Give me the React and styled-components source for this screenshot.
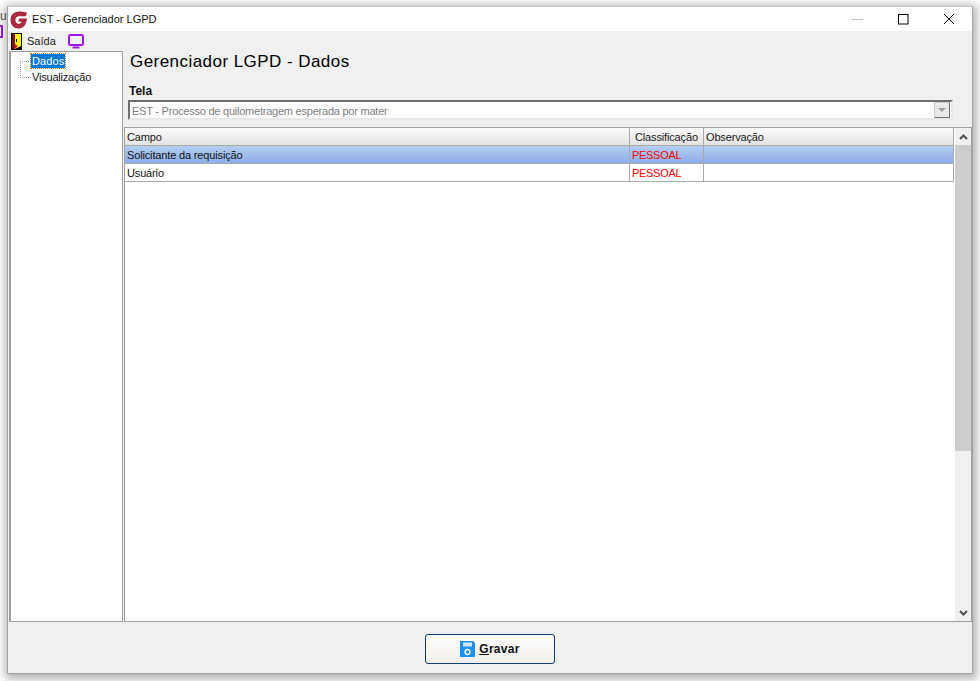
import React from "react"
import styled, { createGlobalStyle } from "styled-components"

const GlobalStyle = createGlobalStyle`
    html, body {
        margin: 0;
        padding: 0;
        height: 100%;
        background: #fff;
        overflow: hidden;
    }
    body {
        font-family: "Liberation Sans", Arial, sans-serif;
        font-size: 11px;
        color: #000;
    }
`

const rows = [
    { campo: "Solicitante da requisição", classificacao: "PESSOAL", observacao: "", selected: true },
    { campo: "Usuário", classificacao: "PESSOAL", observacao: "", selected: false },
]

const Logo = () => (
    <svg width="18" height="18" viewBox="0 0 18 18">
        <path d="M17 2 C15 1 12 0.5 9 0.5 C4 0.5 0.5 4 0.5 9 C0.5 14 4 17.5 8.5 17.5 C12 17.5 14.5 15.5 15.5 13 L17.3 7.6 H9.2 L8.2 10.4 H11.6 C11 12 10 12.8 8.8 12.8 C6.6 12.8 5.4 11.2 5.4 9 C5.4 6.8 7 5.2 9.2 5.2 H15.6 Z" fill="#a92a3e" />
    </svg>
)

const DoorIcon = () => (
    <svg width="11" height="17" viewBox="0 0 11 17">
        <rect x="0" y="0" width="11" height="17" fill="#000" />
        <rect x="1" y="1" width="3" height="15" fill="#7a1414" />
        <path d="M4 1 H10 V13 L4 16 Z" fill="#ffff00" />
        <path d="M4 11 L7 13 L4 16 Z" fill="#c81e1e" />
        <rect x="5" y="6" width="1" height="3" fill="#000" />
    </svg>
)

const ScreenIcon = () => (
    <svg width="16" height="15" viewBox="0 0 16 15">
        <rect x="1" y="1" width="14" height="10" rx="1.5" fill="none" stroke="#9a19e6" strokeWidth="2" />
        <rect x="4.5" y="12.5" width="7" height="2" fill="#9a19e6" />
    </svg>
)

const SaveIcon = () => (
    <svg width="15" height="16" viewBox="0 0 15 16">
        <path d="M0 0 H13 L15 2 V16 H0 Z" fill="#1e90ee" />
        <rect x="3" y="1.5" width="9" height="4" fill="#cfe6fa" />
        <circle cx="7.5" cy="11" r="2.4" fill="none" stroke="#fff" strokeWidth="1.5" />
    </svg>
)

const App = () => {
    return (
        <>
            <GlobalStyle />
            <BehindLetter>u</BehindLetter>
            <BehindIcon />
            <Window>
                <TitleBar>
                    <TitleLogo><Logo /></TitleLogo>
                    <TitleText>EST - Gerenciador LGPD</TitleText>
                    <WindowButtons>
                        <WindowButton>
                            <svg width="11" height="11" viewBox="0 0 11 11">
                                <path d="M0 5.5 H11" stroke="#bdbdbd" strokeWidth="1" />
                            </svg>
                        </WindowButton>
                        <WindowButton>
                            <svg width="11" height="11" viewBox="0 0 11 11">
                                <rect x="0.5" y="0.5" width="9.5" height="9.5" fill="none" stroke="#000" strokeWidth="1" />
                            </svg>
                        </WindowButton>
                        <WindowButton>
                            <svg width="12" height="12" viewBox="0 0 12 12">
                                <path d="M1 1 L11 11 M11 1 L1 11" stroke="#000" strokeWidth="1" />
                            </svg>
                        </WindowButton>
                    </WindowButtons>
                </TitleBar>
                <MenuBar>
                    <DoorIcon />
                    <MenuLabel>Saída</MenuLabel>
                    <ScreenIcon />
                </MenuBar>
                <Main>
                    <TreePanel>
                        <TreeRow>
                            <TreeConnector />
                            <TreeLabel $active>Dados</TreeLabel>
                        </TreeRow>
                        <TreeRow>
                            <TreeConnector $last />
                            <TreeLabel>Visualização</TreeLabel>
                        </TreeRow>
                    </TreePanel>
                    <Content>
                        <Heading>Gerenciador LGPD - Dados</Heading>
                        <FieldLabel>Tela</FieldLabel>
                        <Combo>
                            <ComboText>EST - Processo de quilometragem esperada por mater</ComboText>
                            <ComboButton />
                        </Combo>
                        <GridFrame>
                            <GridBody>
                                <HeaderRow>
                                    <HeaderCell $col="campo">Campo</HeaderCell>
                                    <HeaderCell $col="classificacao" $indent>Classificação</HeaderCell>
                                    <HeaderCell $col="observacao">Observação</HeaderCell>
                                </HeaderRow>
                                {rows.map((row) => (
                                    <DataRow key={row.campo} $selected={row.selected}>
                                        <DataCell $col="campo">{row.campo}</DataCell>
                                        <DataCell $col="classificacao" $red>{row.classificacao}</DataCell>
                                        <DataCell $col="observacao">{row.observacao}</DataCell>
                                    </DataRow>
                                ))}
                            </GridBody>
                            <ScrollBar>
                                <ScrollArrow>
                                    <svg width="9" height="6" viewBox="0 0 9 6">
                                        <path d="M1 5 L4.5 1.5 L8 5" fill="none" stroke="#505050" strokeWidth="2" />
                                    </svg>
                                </ScrollArrow>
                                <ScrollThumb />
                                <ScrollTrack />
                                <ScrollArrow>
                                    <svg width="9" height="6" viewBox="0 0 9 6">
                                        <path d="M1 1 L4.5 4.5 L8 1" fill="none" stroke="#505050" strokeWidth="2" />
                                    </svg>
                                </ScrollArrow>
                            </ScrollBar>
                        </GridFrame>
                    </Content>
                </Main>
                <Footer>
                    <SaveButton>
                        <SaveIcon />
                        <SaveLabel><u>G</u>ravar</SaveLabel>
                    </SaveButton>
                </Footer>
            </Window>
        </>
    )
}

export default App

const BehindLetter = styled.div`
    position: absolute;
    left: 0;
    top: 9px;
    font-size: 12px;
    color: #555;
`

const BehindIcon = styled.div`
    position: absolute;
    left: -14px;
    top: 25px;
    width: 13px;
    height: 9px;
    border: 2px solid #9a19e6;
`

const Window = styled.div`
    position: relative;
    box-sizing: border-box;
    display: flex;
    flex-direction: column;
    width: 966px;
    height: 668px;
    margin: 6px 0 0 7px;
    background: #f0f0f0;
    border: 1px solid #a3a3a3;
    border-top-color: #c4c4c4;
    box-shadow: 1px 2px 9px 3px rgba(0, 0, 0, 0.3);
`

const TitleBar = styled.div`
    display: flex;
    align-items: center;
    flex: 0 0 24px;
    background: #fff;
`

const TitleLogo = styled.div`
    display: flex;
    margin-left: 2px;
    margin-top: 1px;
`

const TitleText = styled.div`
    margin-left: 4px;
    font-size: 11px;
    color: #111;
`

const WindowButtons = styled.div`
    display: flex;
    margin-left: auto;
`

const WindowButton = styled.div`
    display: flex;
    align-items: center;
    justify-content: center;
    width: 46px;
    height: 24px;
`

const MenuBar = styled.div`
    display: flex;
    align-items: center;
    flex: 0 0 20px;
    padding-left: 3px;
`

const MenuLabel = styled.span`
    margin: 0 12px 0 5px;
    font-size: 11px;
    color: #222;
`

const Main = styled.div`
    display: flex;
    flex: 1;
    min-height: 0;
    padding-left: 1px;
`

const TreePanel = styled.div`
    box-sizing: border-box;
    flex: 0 0 114px;
    padding-top: 1px;
    background: #fff;
    border: 1px solid #a0a0a0;
    box-shadow: inset 1px 0 0 #a0a0a0;
`

const TreeRow = styled.div`
    position: relative;
    display: flex;
    align-items: center;
    height: 16px;
    padding-left: 21px;
`

const TreeConnector = styled.span`
    position: absolute;
    left: 10px;
    top: ${(p) => (p.$last ? "-8px" : "8px")};
    width: 10px;
    height: ${(p) => (p.$last ? "16px" : "8px")};
    border-left: 1px dotted #999;
    border-${(p) => (p.$last ? "bottom" : "top")}: 1px dotted #999;
`

const TreeLabel = styled.span`
    padding: 0 1px;
    line-height: 14px;
    font-size: 11px;
    letter-spacing: ${(p) => (p.$active ? "0.1px" : "-0.2px")};
    color: ${(p) => (p.$active ? "#fff" : "#111")};
    background: ${(p) => (p.$active ? "#0078d7" : "transparent")};
    outline: ${(p) => (p.$active ? "1px dotted #e8801a" : "none")};
`

const Content = styled.div`
    display: flex;
    flex-direction: column;
    flex: 1;
    min-width: 0;
    padding-left: 1px;
`

const Heading = styled.h1`
    margin: 0 0 0 6px;
    padding-top: 1px;
    height: 28px;
    font-size: 17px;
    line-height: 20px;
    font-weight: 400;
    letter-spacing: 0.45px;
    color: #000;
`

const FieldLabel = styled.div`
    margin: 4px 0 0 5px;
    height: 16px;
    line-height: 15px;
    font-size: 12px;
    font-weight: 700;
    color: #111;
`

const Combo = styled.div`
    box-sizing: border-box;
    display: flex;
    align-items: center;
    justify-content: space-between;
    width: 825px;
    height: 20px;
    margin-left: 4px;
    padding-right: 1px;
    background: #fff;
    border: 2px solid #6f6f6f;
    border-right-color: #e8e8e8;
    border-bottom-color: #e8e8e8;
`

const ComboText = styled.span`
    padding: 1px 0 0 2px;
    font-size: 11px;
    letter-spacing: -0.23px;
    color: #808080;
`

const ComboButton = styled.div`
    box-sizing: border-box;
    display: flex;
    align-items: center;
    justify-content: center;
    width: 16px;
    height: 16px;
    background: #e9e9e9;
    border: 1px solid #cfcfcf;
    border-right-color: #707070;
    border-bottom-color: #707070;

    &::after {
        content: "";
        border-left: 4px solid transparent;
        border-right: 4px solid transparent;
        border-top: 4px solid #a0a0a0;
    }
`

const GridFrame = styled.div`
    box-sizing: border-box;
    display: flex;
    flex: 1;
    min-height: 0;
    margin-top: 7px;
    background: #fff;
    border: 1px solid #a0a0a0;
`

const GridBody = styled.div`
    flex: 1;
    min-width: 0;
`

const columnWidth = (col) => {
    if (col === "campo") return "flex: 0 0 505px;"
    if (col === "classificacao") return "flex: 0 0 74px;"
    return "flex: 1;"
}

const HeaderRow = styled.div`
    display: flex;
    height: 17px;
    border-bottom: 1px solid #aaa;
`

const HeaderCell = styled.div`
    ${(p) => columnWidth(p.$col)}
    box-sizing: border-box;
    padding-left: ${(p) => (p.$indent ? "5px" : "2px")};
    line-height: 18px;
    font-size: 11px;
    letter-spacing: -0.15px;
    color: #222;
    background: linear-gradient(#fbfbfb, #e3e3e3);
    border-right: 1px solid #aaa;
`

const DataRow = styled.div`
    display: flex;
    height: 17px;
    background: ${(p) => (p.$selected ? "linear-gradient(#b5cdf2, #8dadeb)" : "#fff")};
    border-bottom: 1px solid #aaa;
`

const DataCell = styled.div`
    ${(p) => columnWidth(p.$col)}
    box-sizing: border-box;
    padding-left: 2px;
    line-height: 18px;
    font-size: 11px;
    letter-spacing: ${(p) => (p.$red ? "-0.3px" : "-0.15px")};
    color: ${(p) => (p.$red ? "#ff0000" : "#111")};
    border-right: 1px solid #aaa;
`

const ScrollBar = styled.div`
    display: flex;
    flex-direction: column;
    flex: 0 0 16px;
    margin-left: 1px;
    background: #f0f0f0;
`

const ScrollArrow = styled.div`
    display: flex;
    align-items: center;
    justify-content: center;
    flex: 0 0 17px;
`

const ScrollThumb = styled.div`
    flex: 0 0 306px;
    background: #cdcdcd;
`

const ScrollTrack = styled.div`
    flex: 1;
`

const Footer = styled.div`
    display: flex;
    justify-content: center;
    flex: 0 0 51px;
    padding-top: 12px;
    box-sizing: border-box;
`

const SaveButton = styled.button`
    display: flex;
    align-items: center;
    justify-content: center;
    gap: 4px;
    box-sizing: border-box;
    width: 130px;
    height: 30px;
    padding: 0;
    background: linear-gradient(#ffffff, #f1eeeb);
    border: 1px solid #0f3f78;
    border-radius: 3px;
`

const SaveLabel = styled.span`
    font-family: "Liberation Sans", Arial, sans-serif;
    font-size: 12px;
    font-weight: 700;
    letter-spacing: 0.3px;
    color: #111;
`
